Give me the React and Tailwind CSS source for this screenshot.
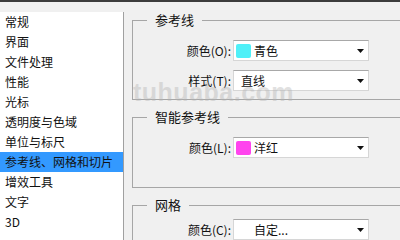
import React from 'react';

const cjk = { fontFamily: '"Noto Sans CJK SC", "Noto Sans", sans-serif' };

const categories = [
    '常规',
    '界面',
    '文件处理',
    '性能',
    '光标',
    '透明度与色域',
    '单位与标尺',
    '参考线、网格和切片',
    '增效工具',
    '文字',
    '3D'
];

function Arrow() {
    return (
        <svg width="7" height="4" viewBox="0 0 7 4" className="shrink-0">
            <path d="M0 0h7L3.5 4z" fill="#111" />
        </svg>
    );
}

function Dropdown({ swatch, text, indent }) {
    return (
        <div className="flex items-center w-[136px] h-[21px] bg-white border border-[#d6d6d6] border-t-[#a8a8a8] pl-[1px] pr-[4px]">
            {swatch ? (
                <span className="w-[15px] h-[14px] rounded-[2px] mr-[3px] ml-[1px] shrink-0" style={{ background: swatch }} />
            ) : (
                <span className={indent ? 'w-[19px] shrink-0' : 'w-[6px] shrink-0'} />
            )}
            <span className="flex-1 text-[12px] leading-none text-[#111]">{text}</span>
            <Arrow />
        </div>
    );
}

function Row({ label, children }) {
    return (
        <div className="flex items-center">
            <div className="w-[100px] text-right pr-[2px] text-[12px] leading-none text-[#111]">{label}</div>
            {children}
        </div>
    );
}

function Group({ title, className, children }) {
    return (
        <fieldset className={`w-[300px] border border-[#a6a6a6] ${className}`}>
            <legend className="ml-[14px] px-[8px] text-[13px] leading-[16px] text-[#111]">{title}</legend>
            {children}
        </fieldset>
    );
}

export default function App() {
    return (
        <div className="relative w-[400px] h-[240px] overflow-hidden bg-[#f0f0f0] border-t-2 border-[#3c3c3c]" style={cjk}>
            <div className="flex">
                <div className="w-[124px] h-[240px] mt-[10px] bg-white border-r border-[#a0a0a0] shrink-0">
                    {categories.map((c, i) => (
                        <div
                            key={c}
                            className={`h-[20px] flex items-center pl-[5px] text-[12px] text-[#111] ${i === 7 ? 'bg-[#3399ff]' : ''}`}
                        >
                            {c}
                        </div>
                    ))}
                </div>
                <div className="ml-[8px] flex flex-col">
                    <Group title="参考线" className="mt-[10px] pt-[12px] pb-[8px]">
                        <div className="flex flex-col gap-[9px]">
                            <Row label="颜色(O):">
                                <Dropdown swatch="#4ff0f8" text="青色" />
                            </Row>
                            <Row label="样式(T):">
                                <Dropdown text="直线" />
                            </Row>
                        </div>
                    </Group>
                    <Group title="智能参考线" className="mt-[9px] pt-[12px] pb-[29px]">
                        <Row label="颜色(L):">
                            <Dropdown swatch="#ff44ee" text="洋红" />
                        </Row>
                    </Group>
                    <Group title="网格" className="mt-[9px] pt-[6px] pb-[20px]">
                        <Row label="颜色(C):">
                            <Dropdown text="自定..." indent />
                        </Row>
                    </Group>
                </div>
            </div>
            {/* watermark */}
            <div
                className="absolute left-[133px] top-[72px] text-[25px] font-bold tracking-[0.5px] text-[#b4b4b4] opacity-40 pointer-events-none"
                style={{ fontFamily: '"Liberation Sans", Arial, sans-serif' }}
            >
                tuhuaba.com
            </div>
        </div>
    );
}
